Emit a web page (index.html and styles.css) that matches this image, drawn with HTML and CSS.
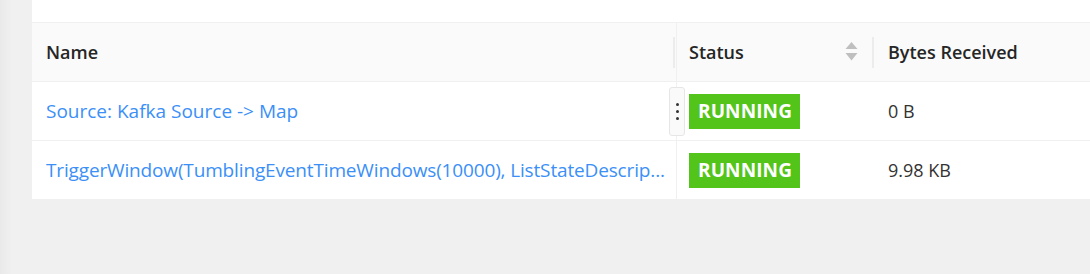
FILE: index.html
```html
<!DOCTYPE html>
<html>
<head>
<meta charset="utf-8">
<link rel="stylesheet" href="styles.css">
</head>
<body>
<div class="page">
  <div class="card">
    <div class="spacer"></div>
    <div class="table">
      <div class="row head">
        <div class="cell c-name"><span>Name</span><i class="divider d-name"></i></div>
        <div class="cell c-status"><span>Status</span>
          <span class="sorter">
            <svg width="13" height="21" viewBox="0 0 13 21"><path d="M6.5 1 L12.5 8 L0.5 8 Z" fill="#bfbfbf"/><path d="M0.5 12 L12.5 12 L6.5 19.5 Z" fill="#bfbfbf"/></svg>
          </span>
          <i class="divider d-status"></i>
        </div>
        <div class="cell c-bytes"><span>Bytes Received</span></div>
      </div>
      <div class="row">
        <div class="cell c-name"><a class="link">Source: Kafka Source -&gt; Map</a></div>
        <div class="cell c-status"><span class="badge">RUNNING</span></div>
        <div class="cell c-bytes">0 B</div>
      </div>
      <div class="row">
        <div class="cell c-name"><a class="link long">TriggerWindow(TumblingEventTimeWindows(10000), ListStateDescrip...</a></div>
        <div class="cell c-status"><span class="badge">RUNNING</span></div>
        <div class="cell c-bytes">9.98 KB</div>
      </div>
      <div class="handle"><i></i><i></i><i></i></div>
    </div>
  </div>
</div>
</body>
</html>
```
FILE: styles.css
```css
html, body {
  margin: 0;
  padding: 0;
}
body {
  width: 1090px;
  height: 274px;
  overflow: hidden;
  background: linear-gradient(to right, #e9e9e9 0px, #f0f0f0 12px, #f0f0f0 100%);
  font-family: "Open Sans", "Noto Sans", sans-serif;
  font-size: 18px;
  color: #262626;
}
.page {
  padding-left: 32px;
}
.card {
  background: #fff;
  width: 1100px;
}
.spacer {
  height: 22px;
}
.table {
  position: relative;
  border-top: 1px solid #f0f0f0;
}
.row {
  display: grid;
  grid-template-columns: 645px 196px 1fr;
  height: 59px;
  box-sizing: border-box;
  border-bottom: 1px solid #f0f0f0;
}
.row.head {
  background: #fafafa;
  font-weight: 600;
}
.cell {
  position: relative;
  display: flex;
  align-items: center;
  box-sizing: border-box;
  min-width: 0;
  white-space: nowrap;
}
.c-name {
  padding-left: 14px;
  padding-right: 4px;
  border-right: 1px solid #f0f0f0;
}
.c-status {
  padding-left: 12px;
}
.c-bytes {
  padding-left: 15px;
  color: #333;
}
.head .c-bytes {
  color: #262626;
}
.link {
  color: #3b8ff7;
  font-size: 19px;
  white-space: nowrap;
  display: block;
}
.link.long {
  letter-spacing: -0.15px;
}
.divider {
  position: absolute;
  top: 14px;
  width: 2px;
  height: 31px;
  background: #ececec;
}
.d-name {
  right: 1px;
}
.d-status {
  right: -1px;
}
.sorter {
  position: absolute;
  right: 15px;
  top: 18px;
  display: flex;
}
.badge {
  background: #52c41a;
  color: #fff;
  font-weight: 700;
  font-size: 19px;
  line-height: 35px;
  height: 35px;
  padding: 0 8px 0 9px;
  letter-spacing: 0.1px;
}
.handle {
  position: absolute;
  left: 637px;
  top: 64px;
  width: 16px;
  height: 49px;
  box-sizing: border-box;
  border: 1px solid #e6e6e6;
  border-radius: 3px;
  background: #fafafa;
  display: flex;
  flex-direction: column;
  align-items: center;
  justify-content: center;
  gap: 4px;
}
.handle i {
  width: 3px;
  height: 3px;
  border-radius: 50%;
  background: #333;
}
```
